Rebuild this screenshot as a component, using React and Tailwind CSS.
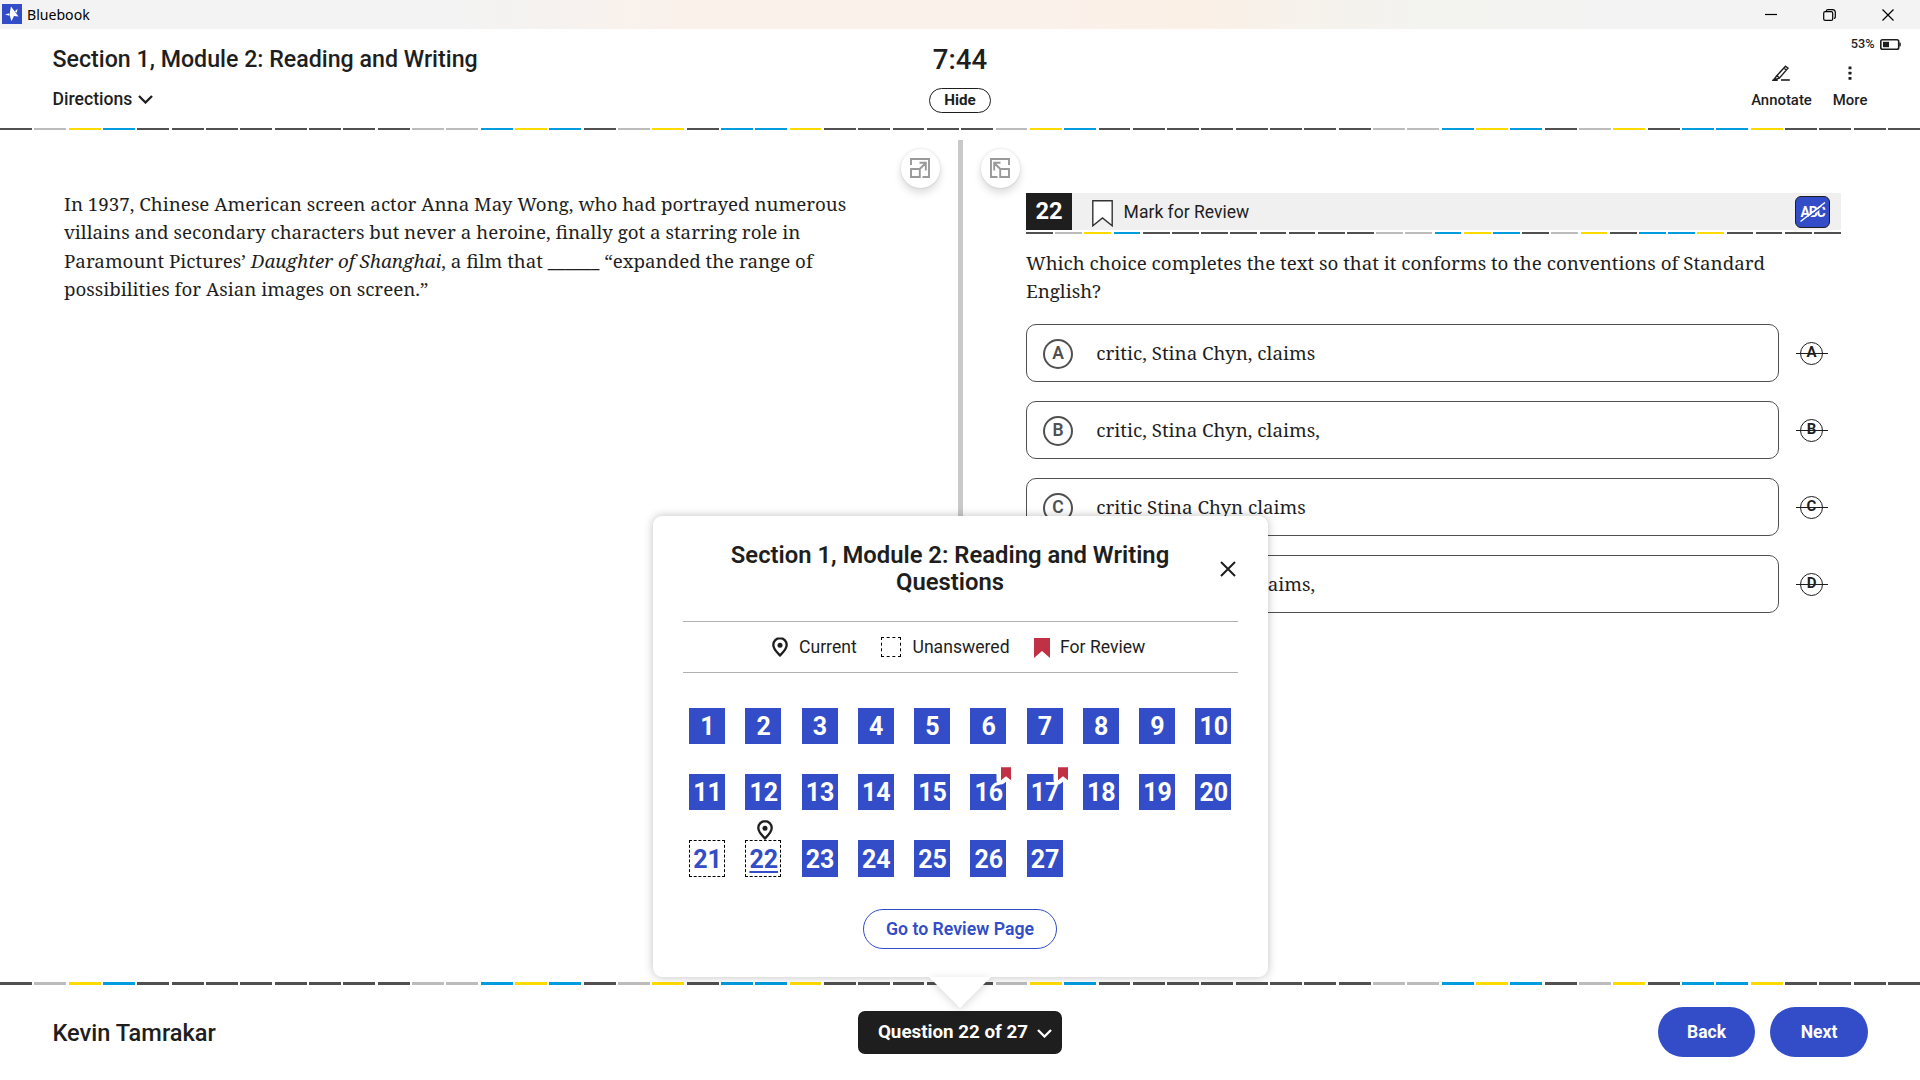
const STRIPE = 'DGYBDDDDDDDDGGBYBDGYDBBYDDDD';
const STRIPE_COLORS = {
  D: 'bg-[#505050]',
  G: 'bg-[#bcbcbc]',
  Y: 'bg-[#fedb00]',
  B: 'bg-[#009cde]',
};

const OPTIONS = [
  ['A', 'critic, Stina Chyn, claims'],
  ['B', 'critic, Stina Chyn, claims,'],
  ['C', 'critic Stina Chyn claims'],
  ['D', 'critic Stina Chyn, claims,'],
];

const QUESTIONS = Array.from({ length: 27 }, (_, i) => i + 1);
const UNANSWERED = [21, 22];
const FOR_REVIEW = [16, 17];
const CURRENT = 22;

function Stripe({ repeat = 1, className }) {
  return (
    <div className={'flex shrink-0 gap-[2.4px] ' + className}>
      {STRIPE.repeat(repeat).split('').map((c, i) => (
        <div key={i} className={'flex-1 ' + STRIPE_COLORS[c]} />
      ))}
    </div>
  );
}

function Chevron({ className }) {
  return (
    <svg viewBox="0 0 15 9" fill="none" stroke="currentColor" strokeWidth="2.3" className={className}>
      <path d="M1 1l6.5 6.5L14 1" />
    </svg>
  );
}

function Pin({ className }) {
  return (
    <svg viewBox="0 0 16 20" className={className}>
      <path d="M8 1.2c-3.7 0-6.7 2.9-6.7 6.7 0 4 3.7 7.4 6.7 10.5 3-3.1 6.7-6.5 6.7-10.5C14.7 4.1 11.7 1.2 8 1.2z" fill="#fff" stroke="#1e1e1e" strokeWidth="2.3" />
      <circle cx="8" cy="8.2" r="2.5" fill="#1e1e1e" />
    </svg>
  );
}

function ExpandButton({ mirrored, className }) {
  return (
    <button className={'flex size-[39px] items-center justify-center rounded-full bg-white shadow-[0_5px_8px_rgba(0,0,0,0.14),0_0_3px_rgba(0,0,0,0.12)] ' + className}>
      <svg viewBox="0 0 20 20" fill="none" stroke="#999" strokeWidth="1.9" className={mirrored ? 'size-5 -scale-x-100' : 'size-5'}>
        <path d="M1 7V1h18v18h-6.500M1 11h8.800v8H1zM9.700 11l6-6M9.500 4.700H15.800V12.500" />
      </svg>
    </button>
  );
}

function TitleBar() {
  return (
    <div className="flex h-[29px] shrink-0 items-center bg-[linear-gradient(90deg,#f3f3f3_24%,#faf1eb_35%,#faf1eb_54%,#fbf0e6_62%,#f6f2ec_68%,#f3f3ef_74%,#f3f3f3_83%)] pl-0.5">
      <svg viewBox="0 0 20 20" className="mb-[3px] mt-[2px] size-5">
        <rect width="20" height="20" fill="#324dc7" />
        <path d="M9 2.500l7.500 10-4.500-.4L9.400 17.200 8 12V7.500zM3 10.600l4.500-1.400v2.600zM12.800 7.300l2.700-2.600-.6 4.100z" fill="#fff" />
      </svg>
      <span className="ml-[5px] mt-px font-['Noto_Sans'] text-[14.1px] leading-none text-black">Bluebook</span>
      <div className="ml-auto flex items-center text-black">
        <svg viewBox="0 0 12 12" className="size-3" stroke="currentColor" fill="none"><path d="M0 5.500h12" strokeWidth="1.2" /></svg>
        <svg viewBox="0 0 13 12" className="ml-[46px] h-3 w-[13px]" stroke="currentColor" strokeWidth="1.2" fill="none">
          <rect x=".7" y="2.7" width="9" height="8.7" rx="1.5" />
          <path d="M3.200 2.500V2Q3.400.6 5 .6h4.500Q12.300.8 12.300 3.200v4.800q0 1.300-1.400 1.500" />
        </svg>
        <svg viewBox="0 0 12 12" className="ml-[46px] mr-[26px] size-3" stroke="currentColor" strokeWidth="1.2" fill="none"><path d="M.5.5l11 11M11.500.5l-11 11" /></svg>
      </div>
    </div>
  );
}

function Header() {
  return (
    <header className="grid h-[99px] shrink-0 grid-cols-3 font-medium">
      <div className="pl-[52.5px] pt-4">
        <h1 className="text-[23.2px] leading-7">Section 1, Module 2: Reading and Writing</h1>
        <div className="mt-4 flex items-center gap-[6px] text-[17.6px] leading-5">
          Directions
          <Chevron className="h-[9px] w-[15px]" />
        </div>
      </div>
      <div className="flex flex-col items-center pt-[15px]">
        <div className="text-[27.6px] leading-8">7:44</div>
        <button className="mt-3 h-[25px] w-[62px] rounded-full border border-[#1e1e1e] pb-px text-[15.2px] font-bold leading-[22px]">Hide</button>
      </div>
      <div className="flex flex-col items-end pt-[7px]">
        <div className="mr-[19.4px] flex items-center gap-[5px] text-[12.7px] leading-4">
          53%
          <svg viewBox="0 0 21 11" className="h-[11px] w-[21px]">
            <rect x=".8" y=".8" width="17.9" height="9.4" rx="1.8" fill="none" stroke="#1e1e1e" strokeWidth="1.6" />
            <rect x="3" y="2.8" width="6" height="5.4" fill="#1e1e1e" />
            <path d="M19.300 3.500h.7q.8 0 .8 1v2q0 1-.8 1h-.7z" fill="#1e1e1e" />
          </svg>
        </div>
        <div className="mr-[52.6px] mt-[13px] flex gap-[21px] text-[14.9px]">
          <div className="flex flex-col items-center">
            <svg viewBox="0 0 18 16" className="h-4 w-[18px]" fill="none" stroke="#1e1e1e" strokeWidth="1.4">
              <path d="M13.500 1.200l2.500 1.900-8.700 10L1.500 15l3.300-4.300zM11.800 3l2.500 2M4.800 10.500l2.400 2.200M.2 15.300h5.500" />
              <path d="M9 15h8.800" strokeWidth="1.6" />
            </svg>
            <span className="mt-[9px] leading-5">Annotate</span>
          </div>
          <div className="flex flex-col items-center">
            <svg viewBox="0 0 4 16" className="h-4 w-1" fill="#1e1e1e">
              <rect x=".5" y="1.5" width="3" height="2.8" rx=".5" />
              <rect x=".5" y="6.7" width="3" height="2.8" rx=".5" />
              <rect x=".5" y="11.9" width="3" height="2.8" rx=".5" />
            </svg>
            <span className="mt-[9px] leading-5">More</span>
          </div>
        </div>
      </div>
    </header>
  );
}

function Passage() {
  return (
    <section className="flex w-[958px] flex-col pt-[18.5px]">
      <ExpandButton className="mr-[18.5px] self-end" />
      <p className="mt-[2.5px] whitespace-nowrap pl-16 font-['Noto_Serif',serif] text-[18.75px] leading-[28.3px]">
        In 1937, Chinese American screen actor Anna May Wong, who had portrayed numerous
        <br />
        villains and secondary characters but never a heroine, finally got a starring role in
        <br />
        Paramount Pictures’ <i>Daughter of Shanghai</i>, a film that ______ “expanded the range of
        <br />
        possibilities for Asian images on screen.”
      </p>
    </section>
  );
}

function Option({ letter, text }) {
  return (
    <div className="flex items-center">
      <div className="flex h-[58px] w-[753px] items-center rounded-[10px] border border-[#505050] pl-4">
        <span className="mt-[2px] flex size-[30px] items-center justify-center rounded-full border-2 border-[#505050] font-['Roboto'] text-[17.5px] font-semibold leading-none text-[#505050]">
          {letter}
        </span>
        <span className="ml-[23.3px] leading-7">{text}</span>
      </div>
      <div className="relative ml-[16.5px] flex h-6 w-8 items-center justify-center font-['Roboto'] font-bold">
        <span className="flex size-[23px] items-center justify-center rounded-full border-[1.5px] border-[#1e1e1e] pb-px text-[15px] leading-none">{letter}</span>
        <span className="absolute inset-x-0 top-[11.5px] h-px bg-[#1e1e1e]" />
      </div>
    </div>
  );
}

function Question() {
  return (
    <section className="flex flex-1 flex-col pt-[18.5px]">
      <ExpandButton mirrored className="ml-[17.9px]" />
      <div className="ml-[63px] mt-[5.5px] w-[815px]">
        <div className="flex h-[37px] items-center bg-[#f0f0f0]">
          <div className="h-full w-[46px] bg-[#1e1e1e] text-center text-[23.7px] font-bold leading-9 text-white">22</div>
          <svg viewBox="0 0 21 27" className="ml-5 mt-1 h-[27px] w-[21px]">
            <path d="M.8.8h19.400v25L10.500 18 .8 25.800z" fill="#fff" stroke="#333" strokeWidth="1.4" />
          </svg>
          <span className="ml-[10.6px] text-[17.55px] leading-5">Mark for Review</span>
          <div className="relative ml-auto mr-[11px] flex h-8 w-[35px] items-center justify-center rounded-md border-[1.5px] border-[#1e1e1e] bg-[#324dc7]">
            <span className="text-[14px] font-bold leading-none tracking-[-1.2px] text-white">ABC</span>
            <svg viewBox="0 0 35 32" className="absolute -left-px -top-px h-8 w-[35px]" fill="none">
              <path d="M7 26.500L31.500 7.500" stroke="#324dc7" strokeWidth="1.5" />
              <path d="M5.500 25.500L30 6.500" stroke="#fff" strokeWidth="1.5" />
            </svg>
          </div>
        </div>
        <Stripe className="mt-0.5 h-0.5" />
        <div className="font-['Noto_Serif',serif] text-[18.75px]">
          <p className="mt-[15px] h-[57px] whitespace-nowrap leading-[28.3px]">
            Which choice completes the text so that it conforms to the conventions of Standard
            <br />
            English?
          </p>
          <div className="mt-[18px] flex w-[802px] flex-col gap-[19px]">
            {OPTIONS.map(([letter, text]) => (
              <Option key={letter} letter={letter} text={text} />
            ))}
          </div>
        </div>
      </div>
    </section>
  );
}

function NumberTile({ n }) {
  const open = UNANSWERED.includes(n);
  return (
    <div
      className={
        'relative flex w-9 items-center justify-center pl-px text-[25px] font-bold leading-none ' +
        (n > 20 ? 'h-[37px] pt-px ' : 'h-9 ') +
        (open ? 'border border-dashed border-black text-[#324dc7]' : 'bg-[#324dc7] text-white')
      }
    >
      {FOR_REVIEW.includes(n) && (
        <svg viewBox="0 0 20 22" className="absolute -top-[11px] left-[26px] h-[22px] w-5">
          <path d="M5 4h10v13l-5-4-5 4z" fill="#fff" stroke="#fff" strokeWidth="9" strokeLinejoin="round" />
          <path d="M5 4.300h10v13l-5-4-5 4z" fill="#c13145" />
        </svg>
      )}
      <span className={n === CURRENT ? 'relative underline decoration-2 underline-offset-[3px]' : 'relative'}>{n}</span>
      {n === CURRENT && <Pin className="absolute -top-[21px] left-[11px] h-5 w-4" />}
    </div>
  );
}

function Navigator() {
  return (
    <div className="absolute left-[653px] top-[516px] h-[461px] w-[615px] rounded-[9px] bg-white px-[30px] shadow-[0_0_10px_rgba(0,0,0,0.25)]">
      <div className="flex h-[105px] items-start">
        <h2 className="ml-6 mt-[26px] w-[486px] text-center text-[23.8px] font-semibold leading-[27px]">
          Section 1, Module 2: Reading and Writing
          <br />
          Questions
        </h2>
        <svg viewBox="0 0 16 16" className="ml-[26.5px] mt-[45px] size-4" fill="none" stroke="#1e1e1e" strokeWidth="2">
          <path d="M1 1l14 14M15 1L1 15" />
        </svg>
      </div>
      <div className="flex h-[52px] items-center border-y border-[#b0b0b0] pl-[89px] text-[17.6px]">
        <Pin className="h-5 w-4" />
        <span className="ml-[11px] w-[57px]">Current</span>
        <span className="ml-[25px] size-5 border border-dashed border-black" />
        <span className="ml-[11.5px] w-[96px]">Unanswered</span>
        <svg viewBox="0 0 16 20" className="ml-[25px] mt-0.5 h-5 w-4"><path d="M0 0h16v20l-8-7-8 7z" fill="#c13145" /></svg>
        <span className="ml-[10.5px]">For Review</span>
      </div>
      <div className="ml-1.5 mt-[35px] grid w-max grid-cols-10 gap-x-[20.25px] gap-y-[30px]">
        {QUESTIONS.map((n) => (
          <NumberTile key={n} n={n} />
        ))}
      </div>
      <div className="mt-8 flex justify-center pr-px">
        <button className="h-10 w-[194px] rounded-full border border-[#324dc7] text-[17.7px] font-semibold text-[#324dc7]">Go to Review Page</button>
      </div>
      <svg viewBox="0 0 82 42" className="absolute left-[266px] top-[461px] h-[42px] w-[82px] drop-shadow-[0_2px_4px_rgba(0,0,0,0.15)]">
        <path d="M10 0h62L41 31z" fill="#fff" />
      </svg>
    </div>
  );
}

function Footer() {
  return (
    <footer className="grid flex-1 grid-cols-3">
      <div className="pl-[52.5px] pt-[34px] text-[23.6px] font-medium leading-7">Kevin Tamrakar</div>
      <div className="flex justify-center pt-[26px]">
        <button className="flex h-[43px] w-[204px] items-center justify-center gap-[9px] rounded-[7px] bg-[#1e1e1e] pb-px pl-[10px] text-[18.8px] font-bold text-white">
          Question 22 of 27
          <Chevron className="mt-[3px] h-[9px] w-[15px]" />
        </button>
      </div>
      <div className="flex justify-end gap-[15px] pr-[52px] pt-[22px] text-[17.5px] font-bold text-white">
        <button className="h-[50px] w-[97px] rounded-full bg-[#324dc7]">Back</button>
        <button className="h-[50px] w-[98px] rounded-full bg-[#324dc7]">Next</button>
      </div>
    </footer>
  );
}

export default function App() {
  return (
    <div className="relative flex h-[1080px] w-[1920px] flex-col overflow-hidden bg-white font-['Roboto',sans-serif] text-[#1e1e1e]">
      <TitleBar />
      <Header />
      <Stripe repeat={2} className="h-0.5" />
      <main className="flex h-[852px] shrink-0">
        <Passage />
        <div className="mt-[10px] w-[5px] bg-[#c9c9c9]" />
        <Question />
      </main>
      <Stripe repeat={2} className="h-[3px]" />
      <Footer />
      <Navigator />
    </div>
  );
}
